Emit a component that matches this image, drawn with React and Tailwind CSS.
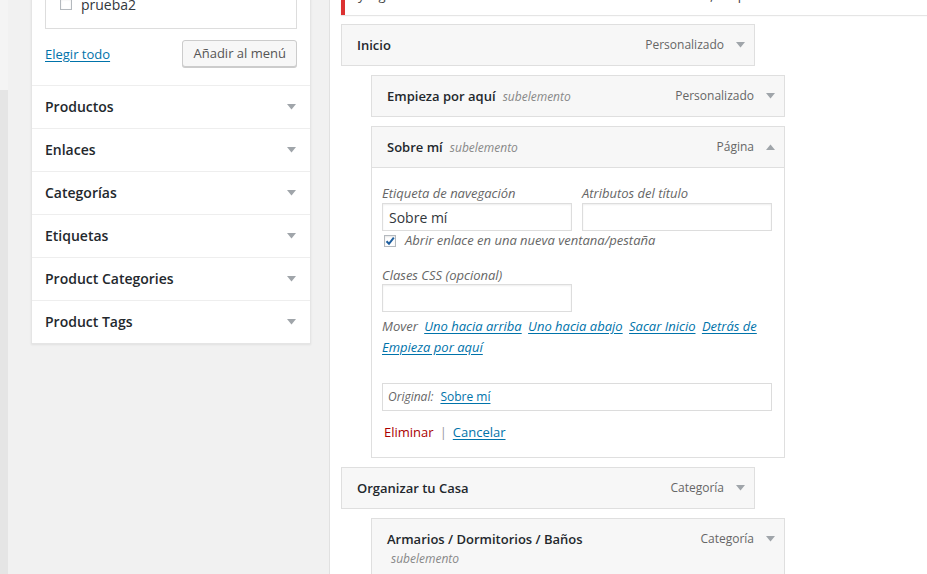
import React from "react";

function Tri({ up = false }) {
  return (
    <svg width="9" height="6" viewBox="0 0 9 6" className="shrink-0">
      {up ? (
        <polygon points="0,6 9,6 4.5,0.5" fill="#a0a5aa" />
      ) : (
        <polygon points="0,0 9,0 4.5,5.5" fill="#a0a5aa" />
      )}
    </svg>
  );
}

function Check({ checked = false }) {
  return (
    <span className="w-[12px] h-[12px] shrink-0 border border-[#b4b9be] bg-white shadow-[inset_0_1px_2px_rgba(0,0,0,0.1)] flex items-center justify-center">
      {checked && (
        <svg width="10" height="10" viewBox="0 0 10 10">
          <path d="M1.5 5.2 L4 7.8 L8.8 1.6" stroke="#1e5e9e" strokeWidth="2" fill="none" />
        </svg>
      )}
    </span>
  );
}

function ItemHeader({ title, sub, type, up, wrapSub }) {
  return (
    <div className={`flex justify-between pl-[15px] pr-[9px] ${wrapSub ? "items-start pt-[10px] pb-[10px]" : "items-center h-[40px]"}`}>
      <div className="text-[13px] leading-[20px] text-[#23282d]">
        <span className="font-semibold">{title}</span>
        {sub && !wrapSub && (
          <span className="ml-[4px] italic text-[12px] text-[#888]"> {sub}</span>
        )}
        {sub && wrapSub && (
          <span className="block ml-[4px] italic text-[12px] text-[#888]">{sub}</span>
        )}
      </div>
      <div className="flex items-center gap-[12px] h-[20px]">
        <span className="text-[12px] text-[#666]">{type}</span>
        <Tri up={up} />
      </div>
    </div>
  );
}

function Item({ sub = false, children, className = "" }) {
  return (
    <div
      className={`w-[414px] mt-[9px] border border-[#dfdfdf] bg-[#f7f7f7] ${sub ? "ml-[30px]" : ""} ${className}`}
    >
      {children}
    </div>
  );
}

const accordion = ["Productos", "Enlaces", "Categorías", "Etiquetas", "Product Categories", "Product Tags"];

export default function App() {
  return (
    <div className="w-[927px] h-[574px] overflow-hidden flex font-['Open_Sans',sans-serif] text-[13px] text-[#444] bg-[#f1f1f1]">
      {/* left strip */}
      <div className="w-[8px] flex flex-col shrink-0">
        <div className="h-[90px] bg-[#f4f4f4]" />
        <div className="flex-1 bg-[#e5e5e5]" />
      </div>

      {/* left column */}
      <div className="w-[322px] shrink-0 bg-[#f1f1f1] pl-[23px] border-r border-[#e1e1e1]">
        <div className="w-[280px] bg-white border-x border-b border-[#e5e5e5] shadow-[0_1px_2px_rgba(0,0,0,0.07)]">
          <div className="px-[13px] pb-[18px]">
            <div className="-mt-[14px] h-[43px] border border-[#dddddd] bg-white pl-[14px] pt-[7px]">
              <div className="flex items-center gap-[9px] h-[20px]">
                <Check />
                <span className="text-[14px] text-[#32373c]">prueba2</span>
              </div>
            </div>
            <div className="mt-[11px] flex items-center justify-between h-[27px]">
              <a className="text-[13px] text-[#0073aa] underline underline-offset-2 mt-[2px]">Elegir todo</a>
              <button className="h-[27px] px-[10px] text-[13px] text-[#555] bg-[#f7f7f7] border border-[#cccccc] rounded-[3px] shadow-[0_1px_0_#cccccc]">
                Añadir al menú
              </button>
            </div>
          </div>
          {accordion.map((t) => (
            <div
              key={t}
              className="h-[43px] border-t border-[#eeeeee] flex items-center justify-between pl-[13px] pr-[14px]"
            >
              <span className="text-[14px] font-semibold text-[#23282d] -mt-[2px]">{t}</span>
              <Tri />
            </div>
          ))}
        </div>
      </div>

      {/* right column */}
      <div className="flex-1 bg-white">
        <div className="ml-[11px] h-[15px] border-l-4 border-[#dc3232] bg-white shadow-[0_1px_1px_rgba(0,0,0,0.1)] overflow-hidden">
          <div className="-mt-[15px] pl-[13px] text-[13px] leading-[20px] text-[#444] whitespace-nowrap">
            y a guardar los cambios en el menú antes de salir del todo, sin perder nada.
          </div>
        </div>

        <div className="pl-[11px]">
          <Item>
            <ItemHeader title="Inicio" type="Personalizado" />
          </Item>
          <Item sub>
            <ItemHeader title="Empieza por aquí" sub="subelemento" type="Personalizado" />
          </Item>
          <Item sub className="bg-white">
            <div className="bg-[#f7f7f7] border-b border-[#dfdfdf]">
              <ItemHeader title="Sobre mí" sub="subelemento" type="Página" up />
            </div>
            <div className="bg-white pl-[10px] pr-[12px] pt-[16px] pb-[14px]">
              <div className="flex gap-[10px]">
                <div className="w-[190px]">
                  <div className="italic text-[13px] leading-[18px] text-[#666]">Etiqueta de navegación</div>
                  <div className="mt-[1px] h-[28px] border border-[#dddddd] shadow-[inset_0_1px_2px_rgba(0,0,0,0.07)] flex items-center pl-[6px] text-[14px] text-[#32373c]">
                    Sobre mí
                  </div>
                </div>
                <div className="w-[190px]">
                  <div className="italic text-[13px] leading-[18px] text-[#666]">Atributos del título</div>
                  <div className="mt-[1px] h-[28px] border border-[#dddddd] shadow-[inset_0_1px_2px_rgba(0,0,0,0.07)]" />
                </div>
              </div>
              <div className="h-[20px] flex items-center gap-[9px] pl-[2px]">
                <Check checked />
                <span className="italic text-[13px] text-[#666]">Abrir enlace en una nueva ventana/pestaña</span>
              </div>
              <div className="mt-[15px] italic text-[13px] leading-[18px] text-[#666]">Clases CSS (opcional)</div>
              <div className="w-[190px] h-[28px] border border-[#dddddd] shadow-[inset_0_1px_2px_rgba(0,0,0,0.07)]" />
              <div className="mt-[4px] italic text-[13px] leading-[21px] text-[#666]">
                Mover{" "}
                <a className="text-[#0073aa] underline underline-offset-2 ml-[3px] mr-[3px]">Uno hacia arriba</a>{" "}
                <a className="text-[#0073aa] underline underline-offset-2 mr-[3px]">Uno hacia abajo</a>{" "}
                <a className="text-[#0073aa] underline underline-offset-2 mr-[3px]">Sacar Inicio</a>{" "}
                <a className="text-[#0073aa] underline underline-offset-2">Detrás de Empieza por aquí</a>
              </div>
              <div className="mt-[25px] h-[28px] border border-[#dcdcdc] flex items-center pl-[5px] text-[12px]">
                <span className="italic text-[#666]">Original:</span>
                <a className="ml-[7px] text-[#0073aa] underline underline-offset-2">Sobre mí</a>
              </div>
              <div className="mt-[12px] h-[20px] flex items-center pl-[2px] text-[13px]">
                <span className="text-[#a00]">Eliminar</span>
                <span className="mx-[6px] text-[#999]">|</span>
                <a className="text-[#0073aa] underline underline-offset-2">Cancelar</a>
              </div>
            </div>
          </Item>
          <Item>
            <ItemHeader title="Organizar tu Casa" type="Categoría" />
          </Item>
          <Item sub>
            <ItemHeader title="Armarios / Dormitorios / Baños" sub="subelemento" type="Categoría" wrapSub />
          </Item>
        </div>
      </div>
    </div>
  );
}
